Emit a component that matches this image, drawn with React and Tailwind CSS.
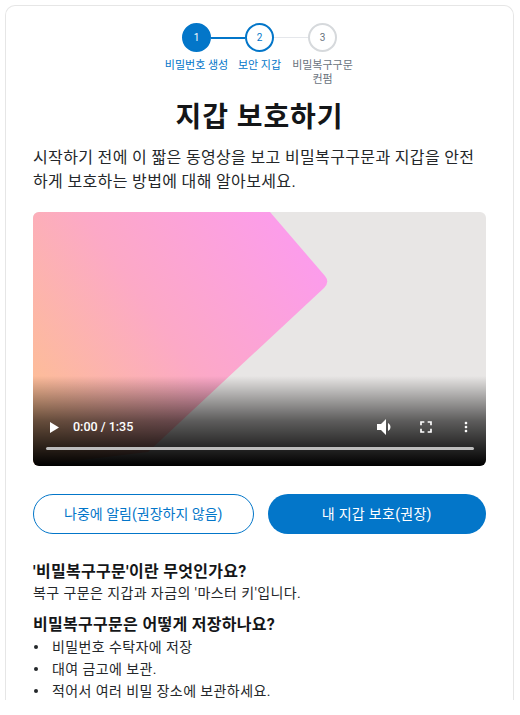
import React from "react";

const font = { fontFamily: 'Roboto, "Noto Sans CJK KR", sans-serif' };

function Steps() {
  return (
    <div className="flex flex-col items-center">
      <div className="flex items-center">
        <div className="w-[29px] h-[29px] rounded-full bg-[#0376c9] border-2 border-[#0376c9] flex items-center justify-center text-white text-[10px]">1</div>
        <div className="w-[34px] h-[2px] bg-[#0376c9]"></div>
        <div className="w-[29px] h-[29px] rounded-full bg-white border-2 border-[#0376c9] flex items-center justify-center text-[#0376c9] text-[10px]">2</div>
        <div className="w-[34px] h-[1px] bg-[#e5e7eb]"></div>
        <div className="w-[29px] h-[29px] rounded-full bg-white border-2 border-[#d6d9dc] flex items-center justify-center text-[#6a737d] text-[10px]">3</div>
      </div>
      <div className="flex mt-[7px] text-[11px] leading-[14px] text-center">
        <div className="w-[63px] flex justify-center text-[#0376c9] whitespace-nowrap">비밀번호 생성</div>
        <div className="w-[63px] flex justify-center text-[#0376c9] whitespace-nowrap">보안 지갑</div>
        <div className="w-[63px] text-[#6a737d]">비밀복구구문 컨펌</div>
      </div>
    </div>
  );
}

function Video() {
  return (
    <div className="relative w-full h-[254px] rounded-[6px] overflow-hidden bg-[#e8e6e5]">
      <svg className="absolute inset-0" width="452" height="254" viewBox="0 0 452 254">
        <defs>
          <linearGradient id="pg" x1="280" y1="0" x2="0" y2="200" gradientUnits="userSpaceOnUse">
            <stop offset="0" stopColor="#fc9af2" />
            <stop offset="0.55" stopColor="#fca9c6" />
            <stop offset="1" stopColor="#fdbf93" />
          </linearGradient>
        </defs>
        <path d="M0 0 L237 0 L292 64 Q297 70 291 76 L115 240 L0 254 Z" fill="url(#pg)" />
      </svg>
      <div className="absolute left-0 right-0 bottom-0 h-[90px] bg-gradient-to-b from-transparent via-[rgba(0,0,0,0.6)] to-black"></div>
      <div className="absolute left-[13px] right-[12px] bottom-[16px]">
        <div className="flex items-center h-[24px] mb-[8px] text-white">
          <svg width="9" height="11" viewBox="0 0 9 11" className="ml-[4px]"><path d="M0 0 L9 5.5 L0 11 Z" fill="white" /></svg>
          <span className="ml-[14px] text-[12.5px] font-medium" style={{ fontFamily: "Roboto, sans-serif" }}>0:00 / 1:35</span>
          <div className="flex-1"></div>
          <svg width="24" height="24" viewBox="0 0 24 24"><path d="M3 9v6h4l5 5V4L7 9H3zm13.5 3c0-1.770-1.020-3.290-2.500-4.030v8.050c1.480-.730 2.500-2.250 2.500-4.020z" fill="white" /></svg>
          <svg width="20" height="20" viewBox="0 0 24 24" className="ml-[18px]"><path d="M7 14H5v5h5v-2H7v-3zm-2-4h2V7h3V5H5v5zm12 7h-3v2h5v-5h-2v3zM14 5v2h3v3h2V5h-5z" fill="white" /></svg>
          <svg width="16" height="16" viewBox="0 0 24 24" className="ml-[22px]"><path d="M12 8c1.1 0 2-.9 2-2s-.9-2-2-2-2 .9-2 2 .9 2 2 2zm0 2c-1.1 0-2 .9-2 2s.9 2 2 2 2-.9 2-2-.9-2-2-2zm0 6c-1.1 0-2 .9-2 2s.9 2 2 2 2-.9 2-2-.9-2-2-2z" fill="white" /></svg>
        </div>
        <div className="h-[3px] rounded-full bg-[#bdbdbd]"></div>
      </div>
    </div>
  );
}

function Bullet({ children }) {
  return (
    <li className="flex items-center h-[22px]">
      <span className="w-[4px] h-[4px] rounded-full bg-[#24272a] ml-[1px] mr-[14px]"></span>
      <span>{children}</span>
    </li>
  );
}

export default function App() {
  return (
    <div className="w-[520px] h-[715px] bg-white overflow-hidden" style={font}>
      <div className="ml-[5px] mr-[6px] mt-[5px] h-[695px] border-x border-t border-[#e6e6e6] rounded-t-[10px] px-[27px] pt-[17px] text-[#24272a] overflow-hidden">
        <Steps />
        <h1 className="mt-[13px] text-center text-[28px] leading-[36px] font-bold tracking-[0.9px] text-[#141618]">지갑 보호하기</h1>
        <p className="mt-[10px] text-[16px] leading-[24px] tracking-[0.35px] text-[#24272a]">시작하기 전에 이 짧은 동영상을 보고 비밀복구구문과 지갑을 안전하게 보호하는 방법에 대해 알아보세요.</p>
        <div className="mt-[18px]">
          <Video />
        </div>
        <div className="mt-[28px] flex gap-[14px]">
          <button className="flex-1 h-[40px] rounded-full border border-[#0376c9] text-[#0376c9] text-[14px]">나중에 알림(권장하지 않음)</button>
          <button className="flex-1 h-[40px] rounded-full bg-[#0376c9] text-white text-[14px] tracking-[0.3px]">내 지갑 보호(권장)</button>
        </div>
        <h2 className="mt-[27px] text-[16px] leading-[22px] font-bold tracking-[0.3px] text-[#141618]">'비밀복구구문'이란 무엇인가요?</h2>
        <p className="text-[14px] leading-[20px] tracking-[0.4px]">복구 구문은 지갑과 자금의 '마스터 키'입니다.</p>
        <h2 className="mt-[11px] text-[16px] leading-[22px] font-bold tracking-[0.3px] text-[#141618]">비밀복구구문은 어떻게 저장하나요?</h2>
        <ul className="text-[14px] tracking-[0.4px]">
          <Bullet>비밀번호 수탁자에 저장</Bullet>
          <Bullet>대여 금고에 보관.</Bullet>
          <Bullet>적어서 여러 비밀 장소에 보관하세요.</Bullet>
        </ul>
      </div>
    </div>
  );
}
